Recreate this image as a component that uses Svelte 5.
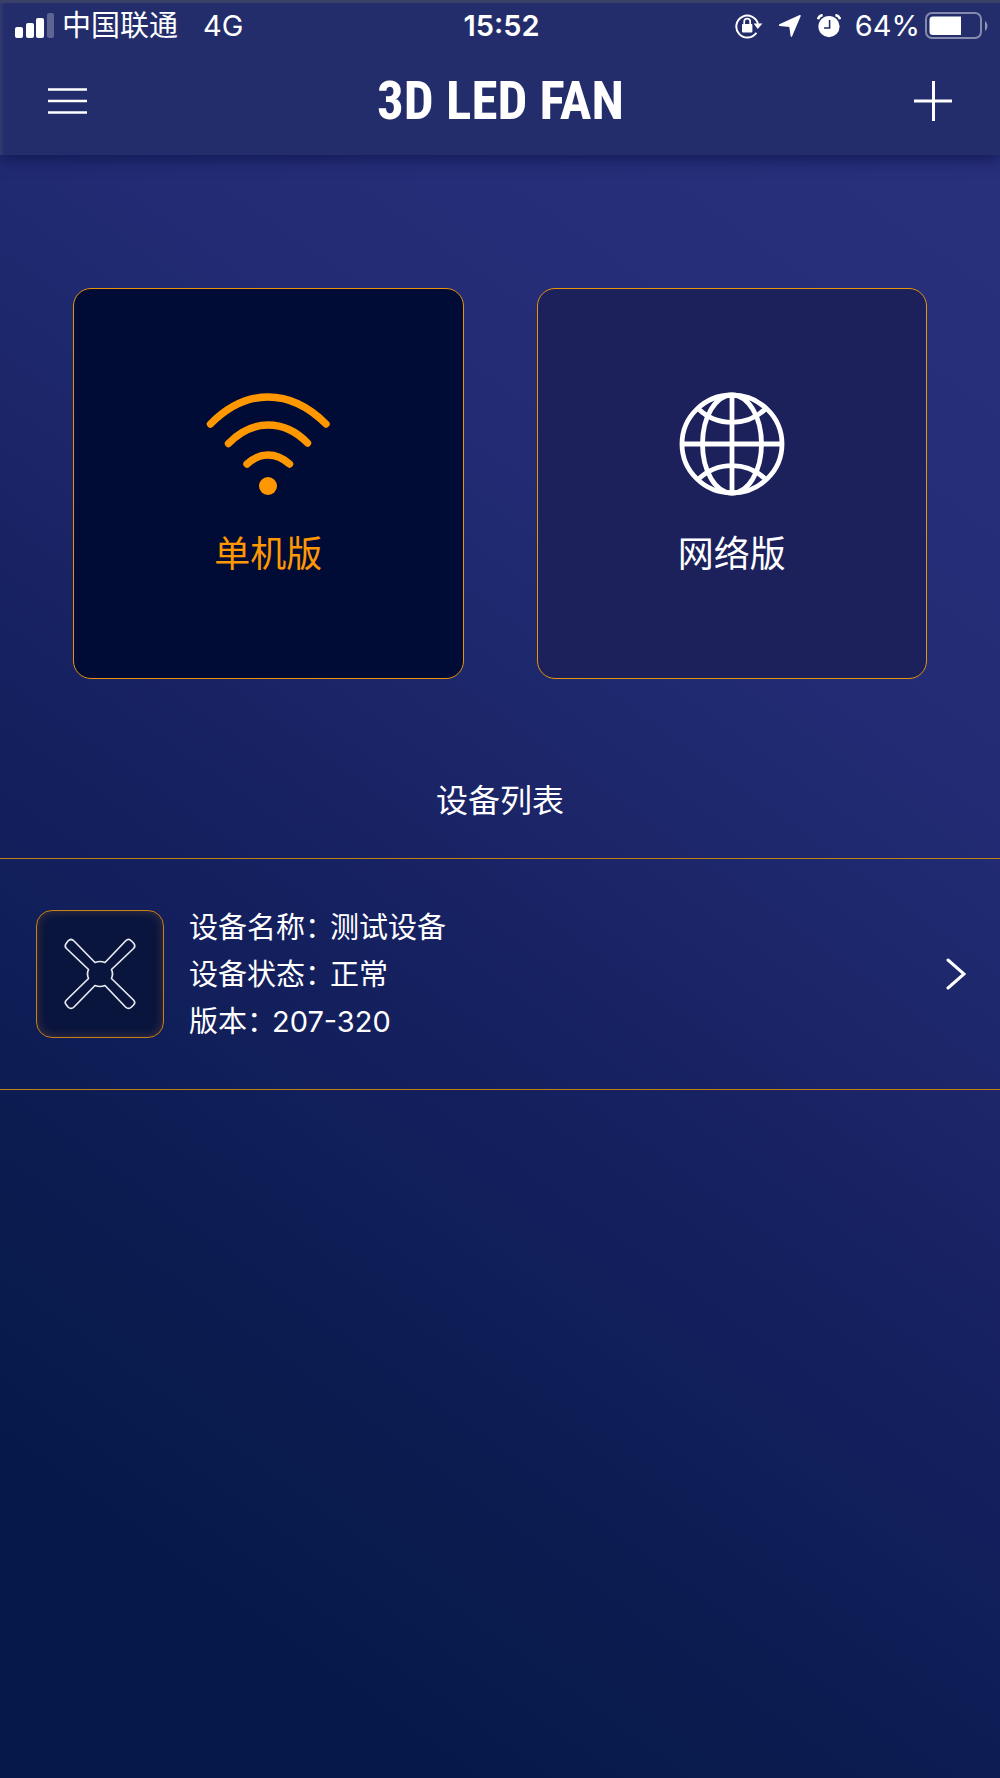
<script>
  let mode = 'single';

  const modes = [
    { id: 'single', label: '单机版' },
    { id: 'network', label: '网络版' },
  ];

  const devices = [
    { name: '测试设备', status: '正常', version: '207-320' },
  ];
</script>

<div class="app">
  <header>
    <div class="status-bar">
      <div class="status-left">
        <svg class="signal" width="40" height="26" viewBox="0 0 40 26" fill="#fff" aria-hidden="true">
          <rect x="0" y="14" width="8" height="11" rx="2" />
          <rect x="11" y="10" width="8" height="15" rx="2" />
          <rect x="21" y="5" width="8" height="20" rx="2" />
          <rect x="32" y="0" width="7" height="25" rx="2" opacity="0.27" />
        </svg>
        <span>中国联通</span>
        <span class="network">4G</span>
      </div>
      <time>15:52</time>
      <div class="status-right">
        <svg width="28" height="26" viewBox="0 0 28 26" aria-hidden="true">
          <path d="M21.4 19.8A11 11 0 1 1 23 11" fill="none" stroke="#fff" stroke-width="2" />
          <path d="M18.6 10.6h8.8l-4.6 5.4z" fill="#fff" />
          <rect x="7" y="11" width="10.4" height="8.4" rx="1" fill="#fff" />
          <path d="M9.2 11.5V8.7a3 3 0 0 1 6 0v2.8" fill="none" stroke="#fff" stroke-width="1.7" />
        </svg>
        <svg class="location" width="24" height="24" viewBox="0 0 24 24" aria-hidden="true">
          <path d="M22 1.8 13.4 22 12 12.2 1.7 11.1z" fill="#fff" stroke="#fff" stroke-width="1.6" stroke-linejoin="round" />
        </svg>
        <svg class="alarm" width="24" height="24" viewBox="0 0 24 24" aria-hidden="true">
          <circle cx="12" cy="12.6" r="10.6" fill="#fff" />
          <path d="M1 5.2A6 6 0 0 1 5.6 1M23 5.2A6 6 0 0 0 18.4 1" fill="none" stroke="#fff" stroke-width="2.6" />
          <path d="M12.6 6v8H7" fill="none" stroke="#232d6b" stroke-width="1.6" />
        </svg>
        <span>64%</span>
        <svg class="battery" width="63" height="28" viewBox="0 0 63 28" aria-hidden="true">
          <rect x="1" y="1" width="55" height="25" rx="6" fill="none" stroke="#fff" stroke-width="2" opacity="0.45" />
          <path d="M36 4.6V23H8a3.5 3.5 0 0 1-3.5-3.5V8A3.5 3.5 0 0 1 8 4.6z" fill="#fff" />
          <path d="M60 9c3.2 2.6 3.2 7.4 0 10z" fill="#fff" opacity="0.5" />
        </svg>
      </div>
    </div>

    <nav>
      <button class="icon-button" aria-label="菜单">
        <svg width="39" height="40" viewBox="0 0 39 40" stroke="#fff" stroke-width="2.6">
          <path d="M0 8.5h39M0 20h39M0 31.5h39" />
        </svg>
      </button>
      <h1>3D LED FAN</h1>
      <button class="icon-button" aria-label="添加">
        <svg width="38" height="40" viewBox="0 0 38 40" stroke="#fff" stroke-width="3">
          <path d="M0 20h38M19.5 0v40" />
        </svg>
      </button>
    </nav>
  </header>

  <main>
    <div class="modes">
      {#each modes as item}
        <button class="mode" class:active={mode === item.id} on:click={() => (mode = item.id)}>
          {#if item.id === 'single'}
            <svg width="124" height="104" viewBox="0 0 124 104" aria-hidden="true">
              <g fill="none" stroke="currentColor" stroke-width="7.4" stroke-linecap="round">
                <path d="M4.5 32C40-4 84-4 120 32" />
                <path d="M22.5 51.5C46 27 78 27 101.5 51" />
                <path d="M41 72C54 60 70 60 83.5 72" />
              </g>
              <circle cx="62" cy="94" r="9" fill="currentColor" />
            </svg>
          {:else}
            <svg width="106" height="104" viewBox="0 0 106 104" fill="none" stroke="currentColor" stroke-width="4.8" aria-hidden="true">
              <ellipse cx="53" cy="52" rx="50" ry="49" />
              <ellipse cx="53" cy="52" rx="29.5" ry="49" />
              <path d="M53 2v100M3 52h100" />
              <path d="M19 16.5C38 35 68 35 87 16.5M19 87.5C38 69 68 69 87 87.5" />
            </svg>
          {/if}
          <span>{item.label}</span>
        </button>
      {/each}
    </div>

    <h2>设备列表</h2>

    <ul class="devices">
      {#each devices as device}
        <li>
          <a href="#device">
            <div class="thumb">
              <svg width="72" height="72" viewBox="0 0 72 72" fill="none" stroke="#e8eaf2" stroke-width="1.7" stroke-linejoin="round" aria-hidden="true">
                <path d="M31 24.5Q36 22.5 41 24.5L61.5 3Q64.5 0 67.5 3L69.5 5Q72 8 69.5 10.5L47.5 31.500Q49.5 36 47.5 40.5L69.5 62Q72 64.5 69.5 67L67.5 69Q64.5 72 61.5 69L41 47.5Q36 49.5 31 47.5L10 69Q7 72 4 69L2.5 67Q0 64.5 2.5 62L24.5 40.5Q22.5 36 24.5 31.5L2.5 10.5Q0 8 2.5 5L4 3Q7 0 10 3z" />
              </svg>
            </div>
            <dl>
              <div><dt>设备名称：</dt><dd>{device.name}</dd></div>
              <div><dt>设备状态：</dt><dd>{device.status}</dd></div>
              <div><dt>版本：</dt><dd>{device.version}</dd></div>
            </dl>
            <svg width="20" height="32" viewBox="0 0 20 32" fill="none" stroke="#fff" stroke-width="3" stroke-linecap="round" aria-hidden="true">
              <path d="M2 2l16 14L2 30" />
            </svg>
          </a>
        </li>
      {/each}
    </ul>
  </main>
</div>

<style>
  :global(body) {
    margin: 0;
    background: #051749;
  }

  .app {
    min-height: 100vh;
    color: #fff;
    font-family: Inter, 'Noto Sans CJK SC', sans-serif;
    background: linear-gradient(
      216deg,
      #29307d 0%,
      #262d78 24%,
      #202a71 36%,
      #1c2669 44%,
      #15205f 57%,
      #111f5a 64%,
      #0d1c53 71%,
      #0a1b4d 79%,
      #061849 87%
    );
  }

  header {
    box-sizing: border-box;
    height: 155px;
    border-top: 3px solid #3b4069;
    background: #232d6b;
    box-shadow: inset 3px 0 2px #2f386f, 0 4px 14px rgba(10, 18, 70, 0.7);
  }

  .status-bar {
    display: grid;
    grid-template-columns: 1fr auto 1fr;
    align-items: center;
    height: 46px;
    padding: 0 12px 0 15px;
    font-size: 29px;
    line-height: 40px;
  }

  .status-left,
  .status-right {
    display: flex;
    align-items: center;
  }

  .status-right {
    justify-content: flex-end;
  }

  .signal {
    margin-right: 7px;
  }

  .network {
    margin-left: 25px;
  }

  time {
    font-weight: 600;
  }

  .location,
  .alarm {
    margin-left: 15px;
  }

  .alarm {
    margin-right: 14px;
  }

  .battery {
    margin-left: 5px;
  }

  nav {
    display: flex;
    align-items: center;
    justify-content: space-between;
    height: 104px;
    padding: 0 48px;
  }

  h1 {
    margin: 0;
    font-family: 'Roboto Condensed', Roboto, sans-serif;
    font-size: 53px;
    font-weight: bold;
    line-height: 60px;
  }

  button {
    padding: 0;
    border: none;
    background: none;
    color: inherit;
    font: inherit;
    cursor: pointer;
  }

  .icon-button svg {
    display: block;
  }

  .modes {
    display: grid;
    grid-template-columns: 1fr 1fr;
    gap: 73px;
    padding: 133px 73px 0;
  }

  .mode {
    display: flex;
    flex-direction: column;
    align-items: center;
    justify-content: center;
    gap: 34px;
    box-sizing: border-box;
    aspect-ratio: 1;
    padding-top: 4px;
    border: 1px solid #e8940a;
    border-radius: 18px;
    background: #1c215b;
    font-size: 36px;
    line-height: 48px;
  }

  .mode.active {
    background: #000c36;
    color: #ff9800;
  }

  h2 {
    margin: 98px 0 33px;
    font-size: 32px;
    font-weight: 400;
    line-height: 48px;
    text-align: center;
  }

  .devices {
    margin: 0;
    padding: 0;
    border-top: 1px solid #c47f14;
    list-style: none;
  }

  li {
    border-bottom: 1px solid #c47f14;
  }

  a {
    display: flex;
    align-items: center;
    padding: 45px 34px 44px 36px;
    color: inherit;
    text-decoration: none;
  }

  .thumb {
    display: flex;
    align-items: center;
    justify-content: center;
    box-sizing: border-box;
    width: 128px;
    height: 128px;
    border: 1px solid #c98114;
    border-radius: 16px;
    background: #0a153e;
    box-shadow: inset 0 0 10px rgba(150, 105, 70, 0.4);
  }

  dl {
    flex: 1;
    margin: 0 0 0 25px;
    font-size: 29px;
    line-height: 47px;
  }

  dl div {
    display: flex;
  }

  dd {
    margin: 0 0 0 -4px;
  }
</style>
